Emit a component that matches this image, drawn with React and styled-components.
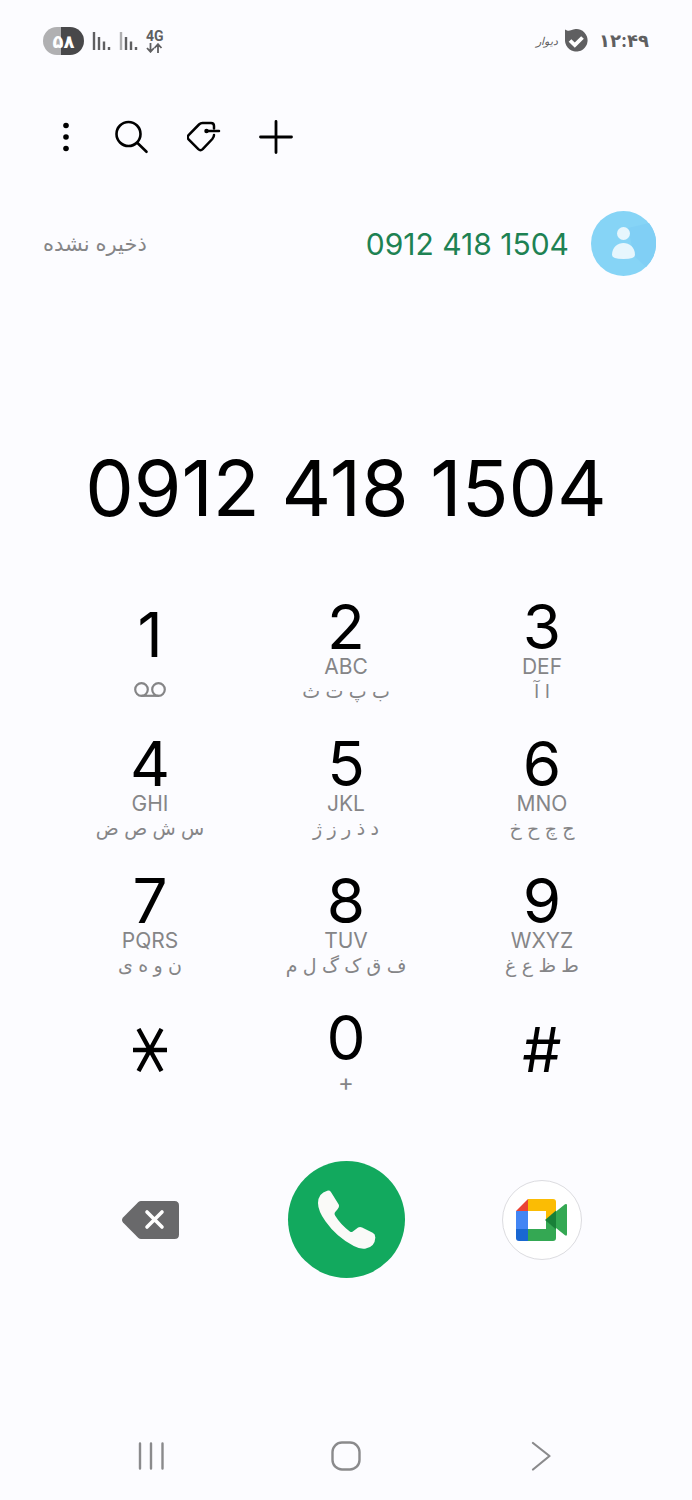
import React, { Component } from 'react'
import styled, { createGlobalStyle } from 'styled-components'

const GlobalStyle = createGlobalStyle`
  * {
    box-sizing: border-box;
  }
  body {
    margin: 0;
    background: #fcfcff;
    font-family: Inter, "DejaVu Sans", sans-serif;
  }
`

const Screen = styled.main`
  display: flex;
  flex-direction: column;
  min-height: 100vh;
`

const PlainButton = styled.button`
  display: flex;
  align-items: center;
  justify-content: center;
  padding: 0;
  border: none;
  background: none;
  color: inherit;
  font-family: inherit;
  cursor: pointer;
`

/* Status bar */

const StatusBar = styled.header`
  display: flex;
  align-items: center;
  justify-content: space-between;
  height: 82px;
  padding: 0 43px;
  color: #5f5f61;
`

const StatusGroup = styled.div`
  display: flex;
  align-items: center;
  gap: ${props => props.$tight ? '6px' : '8px'};
`

const Battery = styled.span`
  width: 41px;
  height: 28px;
  border-radius: 14px;
  background: linear-gradient(90deg, #b0b0b2 44%, #48484a 44%);
  color: #fff;
  font-size: 18px;
  font-weight: bold;
  line-height: 30px;
  text-align: center;
`

const Network = styled.span`
  display: flex;
  flex-direction: column;
  align-items: center;
  font-family: Roboto, sans-serif;
  font-size: 14px;
  font-weight: bold;
  line-height: 13px;
`

const AppName = styled.span`
  font-size: 11px;
  font-style: italic;
`

const Clock = styled.time`
  margin-left: 5px;
  font-size: 18px;
  font-weight: bold;
  line-height: 20px;
`

/* Toolbar */

const Toolbar = styled.nav`
  display: flex;
  align-items: center;
  gap: 38px;
  height: 110px;
  padding: 0 55px;
  color: #000;
`

const ToolButton = styled(PlainButton)`
  width: ${props => props.$narrow ? '22px' : '34px'};
  height: 34px;
`

/* Suggested contact */

const Contact = styled.section`
  display: flex;
  align-items: center;
  gap: 22px;
  margin-top: 19px;
  padding: 0 36px 0 43px;
`

const ContactStatus = styled.span`
  margin-right: auto;
  color: #858587;
  font-size: 21px;
  line-height: 24px;
`

const ContactNumber = styled.a`
  color: #1e8253;
  font-size: 30px;
  line-height: 40px;
  text-decoration: none;
`

const NumberInput = styled.input`
  width: 100%;
  height: 100px;
  margin-top: 162px;
  padding: 0;
  border: none;
  outline: none;
  background: none;
  color: #000;
  font-family: inherit;
  font-size: 77px;
  text-align: center;
`

/* Keypad */

const Keypad = styled.section`
  display: grid;
  grid-template-columns: repeat(3, 1fr);
  row-gap: 37px;
  margin-top: 64px;
  padding: 0 52px;
`

const Key = styled(PlainButton)`
  flex-direction: column;
  justify-content: ${props => props.$center ? 'center' : 'flex-start'};
  height: 100px;
  padding-top: ${props => props.$low ? '8px' : '0'};
  padding-bottom: ${props => props.$center ? '26px' : '0'};
`

const Digit = styled.span`
  color: #000;
  font-size: 62px;
  line-height: 50px;
`

const Letters = styled.span`
  margin-top: 3px;
  color: #858587;
  font-size: 21px;
  line-height: 24px;
`

const PersianLetters = styled(Letters)`
  margin-top: 1px;
  font-size: 19px;
`

const PlusSign = styled(Letters)`
  margin-top: 8px;
  font-size: 24px;
`

const Voicemail = styled.svg`
  margin-top: 22px;
`

const Actions = styled.section`
  display: grid;
  grid-template-columns: repeat(3, 1fr);
  align-items: center;
  justify-items: center;
  margin-top: 48px;
  padding: 0 52px;
`

const CallButton = styled(PlainButton)`
  width: 117px;
  height: 117px;
  border-radius: 50%;
  background: #12a95e;
`

const MeetButton = styled(PlainButton)`
  width: 80px;
  height: 80px;
  border: 1px solid #dcdce0;
  border-radius: 50%;
  background: #fff;
`

const SystemNav = styled.footer`
  display: grid;
  grid-template-columns: repeat(3, 1fr);
  justify-items: center;
  margin-top: auto;
  padding: 0 54px 24px;
`

const NavButton = styled(PlainButton)`
  width: 40px;
  height: 40px;
`

const keys = [
  { digit: '1', voicemail: true },
  { digit: '2', letters: 'ABC', persian: 'ب پ ت ث' },
  { digit: '3', letters: 'DEF', persian: 'ا آ' },
  { digit: '4', letters: 'GHI', persian: 'س ش ص ض' },
  { digit: '5', letters: 'JKL', persian: 'د ذ ر ز ژ' },
  { digit: '6', letters: 'MNO', persian: 'ج چ ح خ' },
  { digit: '7', letters: 'PQRS', persian: 'ن و ه ی' },
  { digit: '8', letters: 'TUV', persian: 'ف ق ک گ ل م' },
  { digit: '9', letters: 'WXYZ', persian: 'ط ظ ع غ' },
  { digit: '*', center: true },
  { digit: '0', plus: true },
  { digit: '#', center: true }
]

const SignalIcon = ({ faded }) => (
  <svg width="19" height="19" viewBox="0 0 19 19" fill="none" stroke="currentColor" strokeWidth="2.400" aria-hidden="true">
    <path d="M2 0v18" opacity={faded ? 0.5 : 1} />
    <path d="M7 5v13M12 9.500v8.500M17 15v3" />
  </svg>
)

const DataArrows = () => (
  <svg width="17" height="10" viewBox="0 0 17 10" fill="none" stroke="currentColor" strokeWidth="1.800" aria-hidden="true">
    <path d="M4.500 0v9M1 5l3.500 3.800L8 5M12 10V1M8.500 5L12 1.200L15.500 5" />
  </svg>
)

const ShieldIcon = () => (
  <svg width="24" height="24" viewBox="0 0 24 24" aria-hidden="true">
    <path fill="currentColor" d="M1 .500c2.500 1.500 4 1.500 6 .800a11.300 11.300 0 1 1-6 10.700z" />
    <path d="M6 11.500l4.800 4.700 7.700-7.700" fill="none" stroke="#fff" strokeWidth="3.800" />
  </svg>
)

const StarIcon = () => (
  <svg width="34" height="44" viewBox="0 0 34 44" fill="none" stroke="#000" strokeWidth="4.400" aria-hidden="true">
    <path d="M0 22h34M5.500 1l23 42M28.500 1l-23 42" />
  </svg>
)

const MeetLogo = () => (
  <svg width="52" height="42" viewBox="0 0 52 42" aria-hidden="true">
    <path fill="#ea4335" d="M0 12L12 0v12z" />
    <path fill="#fbbc04" d="M12 0h25a3 3 0 0 1 3 3v9l-10 9v-9H12z" />
    <path fill="#4285f4" d="M0 12h12v18H0z" />
    <path fill="#1967d2" d="M0 30h12v12H3a3 3 0 0 1-3-3z" />
    <path fill="#34a853" d="M12 30h18v-9l10 9v9a3 3 0 0 1-3 3H12zM40 12.500l9-7.200q2-1 2 1v29q0 2-2 1L40 29z" />
    <path fill="#188038" d="M29 21l11-9.500v19z" />
  </svg>
)

class App extends Component {

  state = {
    number: '0912 418 1504'
  }

  onNumberChange = event => {
    this.setState({ number: event.target.value })
  }

  press = digit => {
    this.setState({ number: this.state.number + digit })
  }

  erase = () => {
    this.setState({ number: this.state.number.slice(0, -1) })
  }

  renderKey = key => (
    <Key
      key={key.digit}
      type="button"
      aria-label={key.digit}
      $center={key.center}
      $low={key.voicemail}
      onClick={() => this.press(key.digit)}
    >
      {key.digit === '*' ? <StarIcon /> : <Digit>{key.digit}</Digit>}
      {key.letters && <Letters>{key.letters}</Letters>}
      {key.persian && <PersianLetters lang="fa" dir="rtl">{key.persian}</PersianLetters>}
      {key.plus && <PlusSign>+</PlusSign>}
      {key.voicemail && (
        <Voicemail width="32" height="15" viewBox="0 0 32 15" fill="none" stroke="#858587" strokeWidth="2.200" aria-hidden="true">
          <circle cx="7.500" cy="7.500" r="6.300" />
          <circle cx="24.500" cy="7.500" r="6.300" />
          <path d="M7.500 13.800h17" />
        </Voicemail>
      )}
    </Key>
  )

  render() {
    return (
      <Screen>
        <GlobalStyle />

        <StatusBar>
          <StatusGroup>
            <Battery>۵۸</Battery>
            <SignalIcon />
            <SignalIcon faded />
            <Network>4G<DataArrows /></Network>
          </StatusGroup>
          <StatusGroup $tight>
            <AppName lang="fa">دیوار</AppName>
            <ShieldIcon />
            <Clock>۱۲:۴۹</Clock>
          </StatusGroup>
        </StatusBar>

        <Toolbar>
          <ToolButton type="button" aria-label="More options" $narrow>
            <svg width="6" height="30" viewBox="0 0 6 30" fill="currentColor">
              <circle cx="3" cy="3.500" r="2.800" />
              <circle cx="3" cy="15" r="2.800" />
              <circle cx="3" cy="26.500" r="2.800" />
            </svg>
          </ToolButton>
          <ToolButton type="button" aria-label="Search">
            <svg width="34" height="34" viewBox="0 0 34 34" fill="none" stroke="currentColor" strokeWidth="2.600" strokeLinecap="round">
              <circle cx="13.500" cy="14" r="12" />
              <path d="M22.500 23l9 8.800" />
            </svg>
          </ToolButton>
          <ToolButton type="button" aria-label="Labels">
            <svg width="34" height="34" viewBox="0 0 34 34" fill="none" stroke="currentColor" strokeWidth="2.500" strokeLinecap="round">
              <path d="M27 8.500V6q0-3-3-3h-8.500q-2 0-3.500 1.500L1.600 15.100q-1.800 2 0 4.200l9.700 9.900q2.200 2 4.400 0L25.300 19q1.700-2 1.700-4" />
              <path d="M19.500 11h12.500" />
              <circle cx="19.500" cy="11" r="1" fill="currentColor" />
            </svg>
          </ToolButton>
          <ToolButton type="button" aria-label="Add contact">
            <svg width="34" height="34" viewBox="0 0 34 34" fill="none" stroke="currentColor" strokeWidth="2.800" strokeLinecap="round">
              <path d="M17 1.500v31M1.500 17h31" />
            </svg>
          </ToolButton>
        </Toolbar>

        <Contact>
          <ContactStatus lang="fa" dir="rtl">ذخیره نشده</ContactStatus>
          <ContactNumber href="tel:09124181504">0912 418 1504</ContactNumber>
          <svg width="65" height="65" viewBox="0 0 65 65" aria-hidden="true">
            <circle cx="32.500" cy="32.500" r="32.500" fill="#86d4f6" />
            <path d="M37 17L58 12a32.500 32.500 0 0 1-3 44L43 45z" fill="#80cff5" />
            <circle cx="32.500" cy="22.500" r="6.500" fill="#e6f6fd" />
            <path d="M21 44c0-16 23-16 23 0q0 4-11.500 4T21 44z" fill="#e6f6fd" />
          </svg>
        </Contact>

        <NumberInput type="tel" aria-label="Phone number" value={this.state.number} onChange={this.onNumberChange} />

        <Keypad>
          {keys.map(this.renderKey)}
        </Keypad>

        <Actions>
          <PlainButton type="button" aria-label="Delete" onClick={this.erase}>
            <svg width="57" height="38" viewBox="0 0 57 38">
              <path fill="#69696b" d="M19 0h33.500q4.500 0 4.500 4.500v29q0 4.500-4.500 4.500H19q-1.500 0-2.600-1.100L1 21.500q-2-2.500 0-5L16.400 1.100Q17.500 0 19 0z" />
              <path d="M25 11l15 15M40 11L25 26" fill="none" stroke="#fff" strokeWidth="3.600" strokeLinecap="round" />
            </svg>
          </PlainButton>
          <CallButton type="button" aria-label="Call">
            <svg width="59" height="59" viewBox="648 117 178 178" fill="#fafaf8">
              <path d="M690 123L713 160q4 7-3 15l-7 8q-4 5 0 12 18 29 44 47 6 4 11-1l14-11q6-3 12 0l32 16q8 4 8 14-1 29-31 34-15 2-34-8-52-27-85-74-23-32-23-56 1-30 28-37 7-2 11 4z" />
            </svg>
          </CallButton>
          <MeetButton type="button" aria-label="Meet">
            <MeetLogo />
          </MeetButton>
        </Actions>

        <SystemNav>
          <NavButton type="button" aria-label="Recent apps">
            <svg width="28" height="28" viewBox="0 0 28 28" fill="none" stroke="#8a8a8c" strokeWidth="2.400" strokeLinecap="round">
              <path d="M3 1.500v25M14 1.500v25M25.500 1.500v25" />
            </svg>
          </NavButton>
          <NavButton type="button" aria-label="Home">
            <svg width="30" height="30" viewBox="0 0 30 30" fill="none" stroke="#8a8a8c" strokeWidth="2.400">
              <rect x="1.500" y="1.500" width="27" height="27" rx="9.500" />
            </svg>
          </NavButton>
          <NavButton type="button" aria-label="Back">
            <svg width="20" height="30" viewBox="0 0 20 30" fill="none" stroke="#8a8a8c" strokeWidth="2.200" strokeLinecap="round" strokeLinejoin="round">
              <path d="M2 2l16.500 13L2 28.500" />
            </svg>
          </NavButton>
        </SystemNav>
      </Screen>
    )
  }

}

export default App
